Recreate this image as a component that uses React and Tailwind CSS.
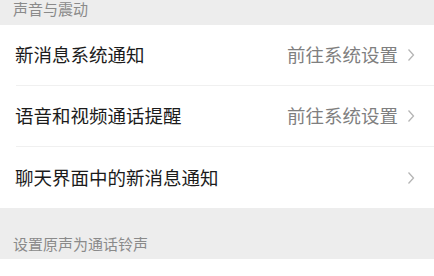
const rows = [
    { label: '新消息系统通知', value: '前往系统设置' },
    { label: '语音和视频通话提醒', value: '前往系统设置' },
    { label: '聊天界面中的新消息通知', value: '' },
];

const Chevron = () => (
    <svg width="8" height="14" viewBox="0 0 8 14" className="shrink-0">
        <path d="M1.5 1.5 L6.5 7 L1.5 12.5" fill="none" stroke="#b5b5b5" strokeWidth="1.3" />
    </svg>
);

export default function App() {
    return (
        <div
            className="w-[434px] h-[276px] overflow-hidden bg-[#ededed]"
            style={{ fontFamily: '"Noto Sans CJK SC", "Noto Sans", sans-serif' }}
        >
            {/* section header, clipped at top */}
            <div className="h-[25px] flex items-end pb-[9px] pl-[13px] text-[15px] leading-none text-[#8a8a8a]">
                声音与震动
            </div>

            <div className="bg-white">
                {rows.map((row, idx) => (
                    <div key={row.label} className="pl-[16px]">
                        <div
                            className={`h-[61px] flex items-center pr-[19px] ${idx < rows.length - 1 ? 'border-b border-[#f0f0f0]' : ''}`}
                        >
                            <span className="flex-1 -ml-[1px] text-[18.5px] text-[#1b1b1b]">{row.label}</span>
                            {row.value && (
                                <span className="mr-[9px] text-[18.5px] text-[#7f7f7f]">{row.value}</span>
                            )}
                            <Chevron />
                        </div>
                    </div>
                ))}
            </div>

            <div className="h-[51px] flex items-end pb-[8px] pl-[13px] text-[15px] leading-none text-[#8a8a8a]">
                设置原声为通话铃声
            </div>
            <div className="h-[20px] bg-white" />
        </div>
    );
}
